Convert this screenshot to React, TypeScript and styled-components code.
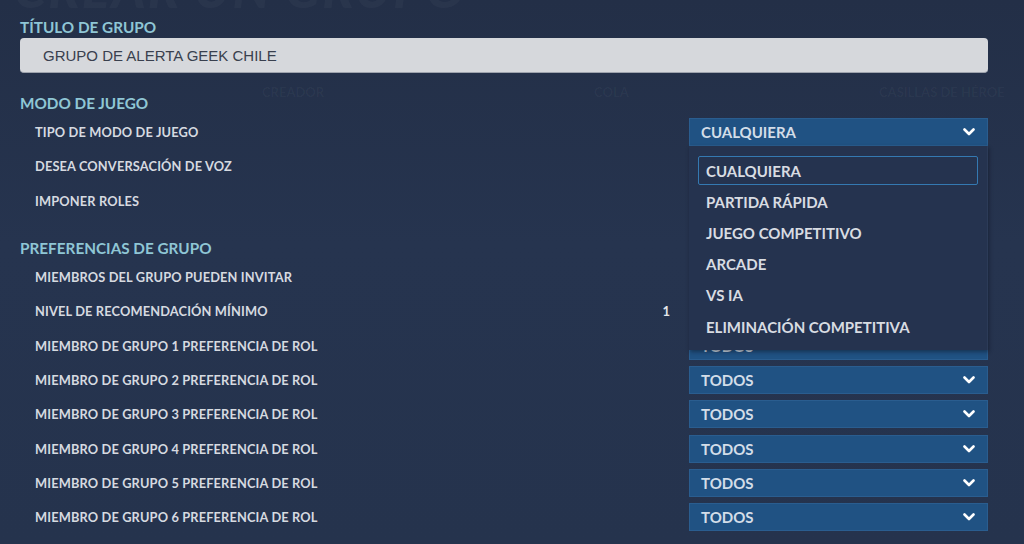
import React from 'react';
import styled, { createGlobalStyle } from 'styled-components';

const GlobalStyle = createGlobalStyle`
  html, body {
    margin: 0;
    padding: 0;
    background: #25324b;
    overflow: hidden;
  }
`;

const FONT = `Lato, "Noto Sans", "DejaVu Sans", sans-serif`;

const Page = styled.div`
  position: relative;
  width: 1024px;
  height: 544px;
  overflow: hidden;
  background: linear-gradient(180deg, #232f47 0%, #26344f 45%, #25334d 100%);
  font-family: ${FONT};
`;

// blurred page behind the dialog
const Ghost = styled.div`
  position: absolute;
  inset: 0;
  pointer-events: none;
  display: flex;
  flex-direction: column;
`;

const GhostTitle = styled.div`
  margin: -40px 0 0 14px;
  height: 56px;
  font-size: 52px;
  font-weight: 900;
  font-style: italic;
  letter-spacing: 2px;
  color: rgba(255, 255, 255, 0.03);
  line-height: 56px;
`;

const GhostHeader = styled.div`
  display: grid;
  grid-template-columns: 250px 330px 285px 1fr;
  margin-top: 60px;
  height: 32px;
  align-items: center;
  font-size: 13px;
  font-weight: 700;
  color: rgba(255, 255, 255, 0.04);
`;

const GhostCell = styled.div<{ $pad: number }>`
  padding-left: ${(p) => p.$pad}px;
  white-space: nowrap;
`;

const Panel = styled.div`
  position: relative;
  z-index: 1;
  padding: 17px 36px 0 20px;
  display: flex;
  flex-direction: column;
`;

const SectionTitle = styled.div<{ $first?: boolean }>`
  margin: ${(p) => (p.$first ? '0 0 1px' : '20px 0 2px')};
  height: 20px;
  line-height: 20px;
  font-size: 15.3px;
  font-weight: 700;
  color: #8fc6d5;
`;

const TextInput = styled.div`
  height: 35px;
  box-sizing: border-box;
  border-radius: 4px;
  background: #d6d8dc;
  border-bottom: 1px solid #9ea3ad;
  padding-left: 23px;
  display: flex;
  align-items: center;
  font-family: "Liberation Sans", Arial, sans-serif;
  font-size: 15px;
  color: #39404e;
`;

const Row = styled.div`
  display: grid;
  grid-template-columns: 1fr 60px 299px;
  align-items: center;
  height: 34.3px;
  padding-left: 15px;
`;

const Label = styled.div`
  font-size: 12.8px;
  font-weight: 700;
  color: #d6dae0;
  letter-spacing: 0.15px;
  white-space: nowrap;
`;

const Value = styled.div`
  text-align: right;
  padding-right: 19px;
  font-size: 13px;
  font-weight: 700;
  color: #e4e7eb;
`;

const Control = styled.div`
  position: relative;
  height: 28px;
`;

const SelectBox = styled.div`
  height: 28px;
  box-sizing: border-box;
  background: #205283;
  border: 1px solid #2a5d8f;
  display: flex;
  align-items: center;
  justify-content: space-between;
  padding: 0 12px 0 11px;
  font-size: 15px;
  font-weight: 700;
  color: #d3dde8;
`;

const Check = styled.div`
  margin: 4px 20px 0 auto;
  width: 20px;
  height: 20px;
  box-sizing: border-box;
  border: 2px solid #4a6a90;
`;

const Track = styled.div`
  margin: 12px 20px 0 0;
  height: 4px;
  background: #3a4a66;
`;

const Menu = styled.div`
  position: absolute;
  z-index: 5;
  top: 100%;
  left: 0;
  width: 299px;
  box-sizing: border-box;
  padding: 10px 9px 9px;
  background: #25334f;
  box-shadow: 1px 2px 4px rgba(10, 16, 28, 0.45);
  border-right: 1px solid #2c3b58;
`;

const MenuItem = styled.div<{ $active?: boolean }>`
  height: 29px;
  box-sizing: border-box;
  margin-bottom: 2.2px;
  padding-left: 7px;
  display: flex;
  align-items: center;
  border: 1px solid ${(p) => (p.$active ? '#3479b2' : 'transparent')};
  border-radius: 2px;
  font-size: 15px;
  font-weight: 700;
  color: #d8dce2;
  &:last-child {
    margin-bottom: 0;
  }
`;

const Chevron = () => (
  <svg width="12" height="8" viewBox="0 0 12 8">
    <polyline points="1.5,1.5 6,6 10.5,1.5" fill="none" stroke="#ffffff" strokeWidth="2.6" strokeLinecap="round" strokeLinejoin="round" />
  </svg>
);

const Select = ({ value, children }: { value: string; children?: React.ReactNode }) => (
  <Control>
    <SelectBox>
      <span>{value}</span>
      <Chevron />
    </SelectBox>
    {children}
  </Control>
);

const modes = ['CUALQUIERA', 'PARTIDA RÁPIDA', 'JUEGO COMPETITIVO', 'ARCADE', 'VS IA', 'ELIMINACIÓN COMPETITIVA'];

export default function App(): JSX.Element {
  return (
    <Page>
      <GlobalStyle />
      <Ghost>
        <GhostTitle>CREAR UN GRUPO</GhostTitle>
        <GhostHeader>
          <div />
          <GhostCell $pad={12}>CREADOR</GhostCell>
          <GhostCell $pad={14}>COLA</GhostCell>
          <GhostCell $pad={14}>CASILLAS DE HÉROE</GhostCell>
        </GhostHeader>
      </Ghost>

      <Panel>
        <SectionTitle $first>TÍTULO DE GRUPO</SectionTitle>
        <TextInput>GRUPO DE ALERTA GEEK CHILE</TextInput>

        <SectionTitle>MODO DE JUEGO</SectionTitle>
        <Row>
          <Label>TIPO DE MODO DE JUEGO</Label>
          <div />
          <Select value="CUALQUIERA">
            <Menu>
              {modes.map((m, i) => (
                <MenuItem key={m} $active={i === 0}>
                  {m}
                </MenuItem>
              ))}
            </Menu>
          </Select>
        </Row>
        <Row>
          <Label>DESEA CONVERSACIÓN DE VOZ</Label>
          <div />
          <Control>
            <Check />
          </Control>
        </Row>
        <Row>
          <Label>IMPONER ROLES</Label>
          <div />
          <Control>
            <Check />
          </Control>
        </Row>

        <SectionTitle>PREFERENCIAS DE GRUPO</SectionTitle>
        <Row>
          <Label>MIEMBROS DEL GRUPO PUEDEN INVITAR</Label>
          <div />
          <Control>
            <Check />
          </Control>
        </Row>
        <Row>
          <Label>NIVEL DE RECOMENDACIÓN MÍNIMO</Label>
          <Value>1</Value>
          <Control>
            <Track />
          </Control>
        </Row>
        {[1, 2, 3, 4, 5, 6].map((n) => (
          <Row key={n}>
            <Label>MIEMBRO DE GRUPO {n} PREFERENCIA DE ROL</Label>
            <div />
            <Select value="TODOS" />
          </Row>
        ))}
      </Panel>
    </Page>
  );
}
